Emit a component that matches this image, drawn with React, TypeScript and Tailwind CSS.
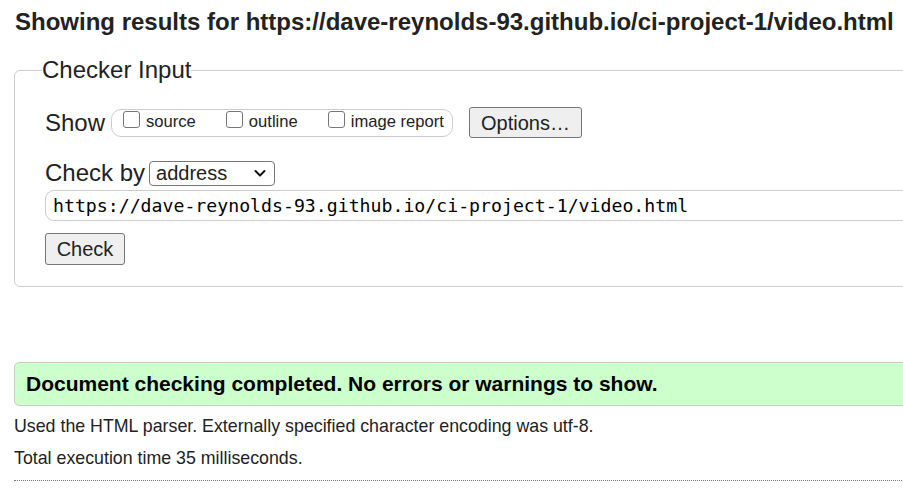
import React from 'react';

const url = 'https://dave-reynolds-93.github.io/ci-project-1/video.html';

function Box({ label }: { label: string }) {
  return (
    <label className="flex items-center">
      <span className="inline-block w-[17px] h-[17px] rounded-[3px] border border-[#767676] bg-white -translate-y-[3px]" />
      <span className="ml-[6px] text-[16.6px]">{label}</span>
    </label>
  );
}

export default function App() {
  return (
    <div className="w-full h-[490px] overflow-hidden bg-white text-[#222] font-['Liberation_Sans',Arial,sans-serif]">
      <div className="w-[1000px] pl-[14px]">
        <h2 className="pt-[7px] pl-[1px] text-[24px] leading-[30px] font-bold">
          Showing results for {url}
        </h2>

        <fieldset className="mt-[19px] border border-[#cccccc] rounded-[6px] pl-[30px] pr-4 pb-[21px]">
          <legend className="-ml-[3px] px-0 text-[24px] leading-[28px]">Checker Input</legend>

          <div className="mt-[23px] flex items-center h-[31px]">
            <span className="text-[24px] leading-[30px]">Show</span>
            <div className="ml-[6px] flex items-center h-[28px] pl-[11px] pr-[8px] border border-[#cccccc] rounded-[10px]">
              <Box label="source" />
              <div className="w-[30px]" />
              <Box label="outline" />
              <div className="w-[30px]" />
              <Box label="image report" />
            </div>
            <button className="ml-[16px] h-[31px] w-[113px] bg-[#efefef] border border-[#767676] rounded-[3px] text-[20px] leading-[24px]">
              Options…
            </button>
          </div>

          <div className="mt-[21px] flex items-center h-[28px]">
            <span className="text-[24px] leading-[28px]">Check by</span>
            <div className="ml-[4px] flex items-center justify-between w-[126px] h-[25px] pl-[6px] pr-[5px] border border-[#767676] rounded-[4px] text-[20px] leading-[22px]">
              <span>address</span>
              <svg width="14" height="14" viewBox="0 0 14 14" className="mr-[2px]">
                <path d="M2.5 5 L7 9.5 L11.5 5" fill="none" stroke="#111" strokeWidth="2" strokeLinecap="round" strokeLinejoin="round" />
              </svg>
            </div>
          </div>

          <div className="mt-[3px] h-[31px] flex items-center pl-[7px] border border-[#cccccc] rounded-l-[9px] font-['DejaVu_Sans_Mono',monospace] text-[18.2px] text-black">
            {url}
          </div>

          <button className="mt-[12px] h-[32px] w-[80px] bg-[#efefef] border border-[#767676] rounded-[3px] text-[20px] leading-[24px]">
            Check
          </button>
        </fieldset>

        <div className="mt-[75px] h-[44px] flex items-center pl-[11px] bg-[#ccffcc] border border-[#cccccc] rounded-[5px] text-[21px] font-bold text-black">
          Document checking completed. No errors or warnings to show.
        </div>

        <p className="mt-[9px] text-[17.8px] leading-[22px]">
          Used the HTML parser. Externally specified character encoding was utf-8.
        </p>
        <p className="mt-[10px] text-[17.8px] leading-[22px]">Total execution time 35 milliseconds.</p>
        <div className="mt-[11px] w-[890px] border-t border-dotted border-[#777]" />
      </div>
    </div>
  );
}
